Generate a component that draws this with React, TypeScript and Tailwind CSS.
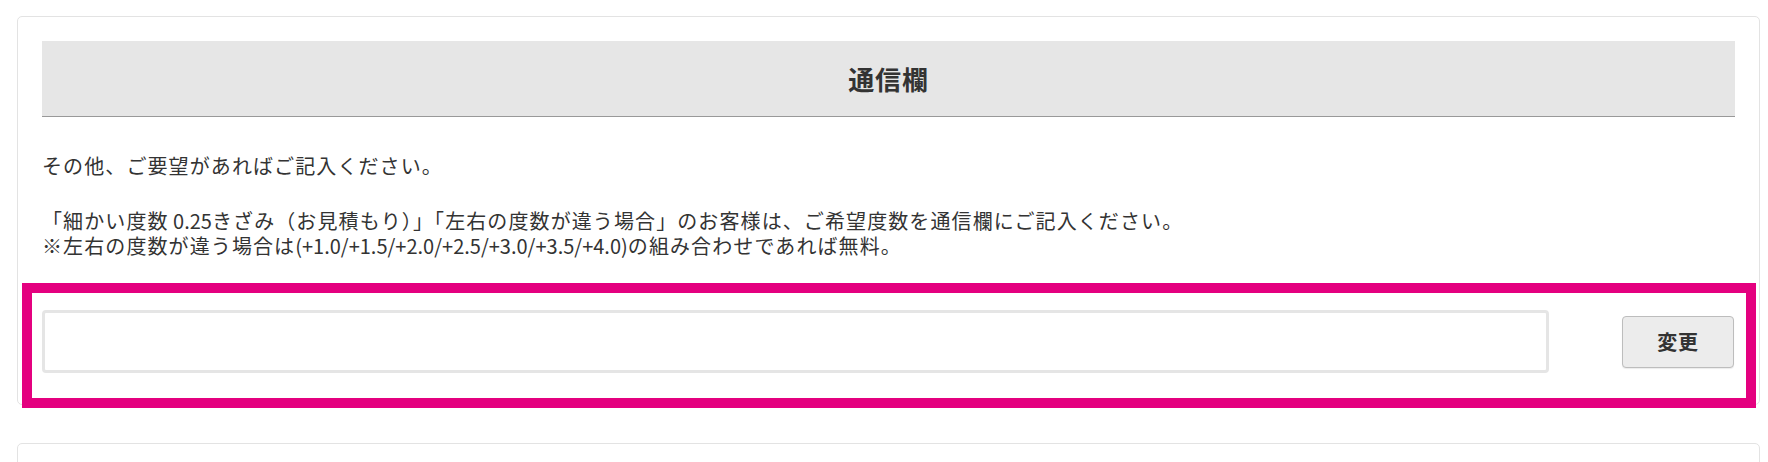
import React from "react";

export default function App() {
  return (
    <div
      className="w-[1768px] h-[462px] overflow-hidden bg-white pt-[16px] pl-[17px] pr-[8px] text-[#333]"
      style={{ fontFamily: '"Noto Sans CJK JP", "Noto Sans", sans-serif' }}
    >
      <div className="border border-[#e3e3e3] rounded-[5px] px-6 pt-6 pb-0 bg-white">
        <div className="h-[76px] bg-[#e6e6e6] border-b border-[#999] flex items-center justify-center">
          <h2 className="text-[26px] font-bold tracking-[0.03em] leading-none text-[#333]">通信欄</h2>
        </div>
        <div className="mt-[36px] text-[20px] leading-[25px] tracking-[0.055em]">
          <p>その他、ご要望があればご記入ください。</p>
          <p className="mt-[30px]">
            「細かい度数<span className="tracking-normal"> 0.25</span>きざみ（お見積もり）」「左右の度数が違う場合」のお客様は、ご希望度数を通信欄にご記入ください。
          </p>
          <p>
            ※左右の度数が違う場合は<span className="tracking-normal">(+1.0/+1.5/+2.0/+2.5/+3.0/+3.5/+4.0)</span>の組み合わせであれば無料。
          </p>
        </div>
        <div className="mt-[25px] -ml-[20px] -mr-[21px] -mb-[4px] border-[10px] border-[#e4007f] pl-[10px] pr-[12px] pt-[17px] pb-[25px] flex items-center relative">
          <input
            type="text"
            className="flex-1 h-[63px] border-[3px] border-[#e5e5e5] rounded-[4px] bg-white outline-none px-3 text-[18px]"
          />
          <button
            type="button"
            className="ml-[73px] w-[112px] h-[52px] rounded-[4px] border border-[#bdbdbd] bg-[#ececec] text-[20px] font-bold tracking-[0.04em] text-[#333] shadow-[0_1px_1px_rgba(0,0,0,0.08)]"
          >
            変更
          </button>
        </div>
      </div>
      <div className="mt-[38px] h-[60px] border border-[#e3e3e3] rounded-[5px] bg-white" />
    </div>
  );
}
